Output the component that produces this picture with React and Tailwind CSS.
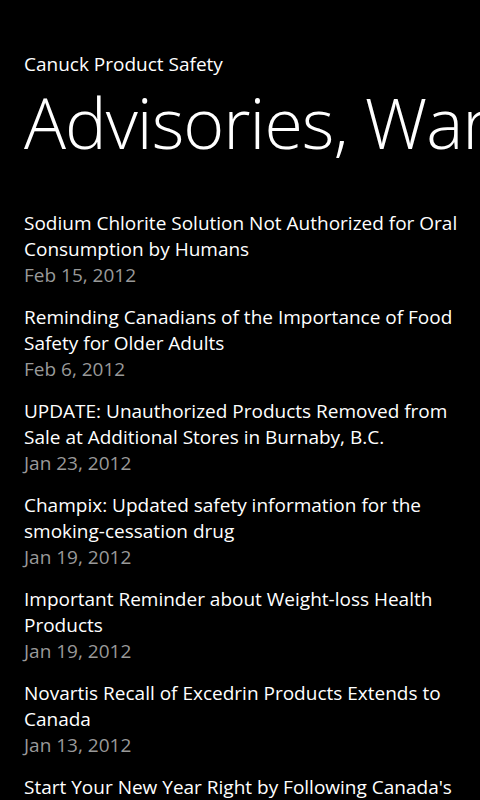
import React from "react";

const items = [
  { title: "Sodium Chlorite Solution Not Authorized for Oral Consumption by Humans", date: "Feb 15, 2012" },
  { title: "Reminding Canadians of the Importance of Food Safety for Older Adults", date: "Feb 6, 2012" },
  { title: "UPDATE: Unauthorized Products Removed from Sale at Additional Stores in Burnaby, B.C.", date: "Jan 23, 2012" },
  { title: "Champix: Updated safety information for the smoking-cessation drug", date: "Jan 19, 2012" },
  { title: "Important Reminder about Weight-loss Health Products", date: "Jan 19, 2012" },
  { title: "Novartis Recall of Excedrin Products Extends to Canada", date: "Jan 13, 2012" },
  { title: "Start Your New Year Right by Following Canada's Food Guide", date: "Jan 5, 2012" },
];

export default function App() {
  return (
    <div
      className="h-[800px] w-[480px] overflow-hidden bg-black text-white"
      style={{ fontFamily: '"Open Sans", "Noto Sans", sans-serif' }}
    >
      <div className="pl-6 pt-[54px]">
        <div className="text-[19px] leading-[20px]">Canuck Product Safety</div>
        <div className="whitespace-nowrap text-[70px] font-light leading-[96px] tracking-[-1px]">
          Advisories, Warnings and Recalls
        </div>
      </div>
      <div className="mt-[40px] pl-6 pr-4">
        {items.map((it) => (
          <div key={it.date + it.title} className="pb-4">
            <div className="text-[19px] leading-[26px]">{it.title}</div>
            <div className="text-[19px] leading-[26px] text-[#999999]">{it.date}</div>
          </div>
        ))}
      </div>
    </div>
  );
}
